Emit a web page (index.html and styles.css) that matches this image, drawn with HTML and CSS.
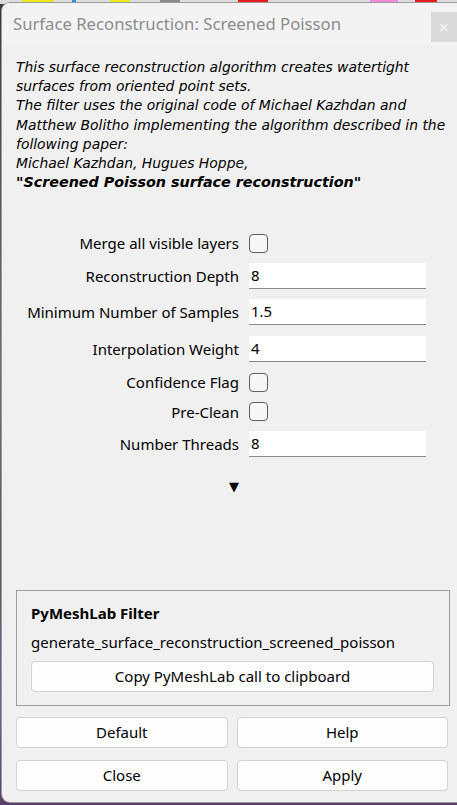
FILE: index.html
```html
<!DOCTYPE html>
<html>
<head>
<meta charset="utf-8">
<link rel="stylesheet" href="styles.css">
</head>
<body>
<div class="desk-strip">
  <span class="blob yellow b1"></span>
  <span class="blob yellow b2"></span>
  <span class="blob blue b3"></span>
  <span class="blob yellow b4"></span>
  <span class="blob gray b5"></span>
  <span class="blob red b6"></span>
  <span class="blob pink b7"></span>
  <span class="blob red b8"></span>
</div>
<div class="window">
  <div class="titlebar">
    <span class="title">Surface Reconstruction: Screened Poisson</span>
    <span class="close">×</span>
  </div>
  <div class="content">
    <div class="desc">
      <div>This surface reconstruction algorithm creates watertight</div>
      <div>surfaces from oriented point sets.</div>
      <div>The filter uses the original code of Michael Kazhdan and</div>
      <div>Matthew Bolitho implementing the algorithm described in the</div>
      <div>following paper:</div>
      <div>Michael Kazhdan, Hugues Hoppe,</div>
      <div class="bold">"Screened Poisson surface reconstruction"</div>
    </div>
    <div class="form">
      <div class="row chk"><span class="label">Merge all visible layers</span><span class="checkbox"></span></div>
      <div class="row inp"><span class="label">Reconstruction Depth</span><span class="input">8</span></div>
      <div class="row inp"><span class="label">Minimum Number of Samples</span><span class="input">1.5</span></div>
      <div class="row inp"><span class="label">Interpolation Weight</span><span class="input">4</span></div>
      <div class="row chk"><span class="label">Confidence Flag</span><span class="checkbox"></span></div>
      <div class="row chk"><span class="label">Pre-Clean</span><span class="checkbox"></span></div>
      <div class="row inp"><span class="label">Number Threads</span><span class="input">8</span></div>
      <div class="row more"><span class="label arrow">▼</span></div>
    </div>
    <div class="group">
      <div class="group-title">PyMeshLab Filter</div>
      <div class="group-text">generate_surface_reconstruction_screened_poisson</div>
      <div class="btn wide">Copy PyMeshLab call to clipboard</div>
    </div>
    <div class="buttons">
      <div class="btn">Default</div>
      <div class="btn">Help</div>
      <div class="btn">Close</div>
      <div class="btn">Apply</div>
    </div>
  </div>
</div>
</body>
</html>
```
FILE: styles.css
```css
html, body {
  margin: 0;
  padding: 0;
}
body {
  width: 457px;
  height: 805px;
  overflow: hidden;
  background: linear-gradient(180deg, #3a3a3a 0%, #6f6f6f 45%, #5a5a5a 70%, #6a62a8 88%, #5b3d6a 100%);
  position: relative;
  font-family: "Noto Sans", "Open Sans", sans-serif;
}
.desk-strip {
  position: absolute;
  left: 0;
  top: 0;
  width: 457px;
  height: 4px;
  background: #dcdcdc;
}
.blob {
  position: absolute;
  top: -3px;
  height: 7px;
  border-radius: 3px;
}
.yellow { background: #f1ea1a; }
.blue { background: #2a8fe0; }
.gray { background: #8a8a8a; }
.red { background: #e81a1a; }
.pink { background: #f08ad8; }
.b1 { left: 22px; width: 32px; }
.b2 { left: 110px; width: 20px; }
.b3 { left: 72px; width: 4px; }
.b4 { left: 112px; width: 18px; }
.b5 { left: 160px; width: 20px; }
.b6 { left: 238px; width: 30px; }
.b7 { left: 370px; width: 28px; }
.b8 { left: 415px; width: 22px; }
.window {
  position: absolute;
  left: 2px;
  top: 3px;
  width: 470px;
  height: 799px;
  background: #f0f0f0;
  border-radius: 8px 0 0 8px;
  box-shadow: 0 0 0 1px #9a9a9a;
  overflow: hidden;
}
.titlebar {
  height: 42px;
  background: #f3f3f3;
  display: flex;
  align-items: center;
  position: relative;
}
.title {
  padding-left: 11px;
  font-size: 16.7px;
  color: #8c8c8c;
  margin-top: -2px;
}
.close {
  position: absolute;
  left: 429px;
  top: 9px;
  width: 26px;
  height: 30px;
  background: #dadada;
  color: #f4f4f4;
  font-size: 18px;
  line-height: 30px;
  text-align: center;
}
.content {
  width: 455px;
  padding-top: 13px;
}
.desc {
  padding-left: 14px;
  font-family: "DejaVu Sans", Verdana, sans-serif;
  font-style: italic;
  font-size: 13.9px;
  line-height: 19.2px;
  color: #000;
  white-space: nowrap;
}
.desc .bold {
  font-weight: bold;
  font-size: 14.3px;
}
.form {
  margin-top: 41px;
  display: flex;
  flex-direction: column;
  gap: 10.5px;
}
.row {
  display: grid;
  grid-template-columns: 237px 177px;
  column-gap: 10px;
  align-items: center;
}
.label {
  text-align: right;
  font-size: 15px;
  color: #000;
  white-space: nowrap;
}
.chk { height: 19px; }
.inp { height: 26px; }
.checkbox {
  width: 17px;
  height: 17px;
  border: 1px solid #5f5f5f;
  border-radius: 4px;
  background: #f6f6f6;
}
.input {
  height: 26px;
  box-sizing: border-box;
  background: #fff;
  border-bottom: 1px solid #8a8a8a;
  font-size: 15px;
  line-height: 25px;
  padding-left: 2px;
}
.more {
  height: 14px;
  margin-top: 12px;
}
.arrow {
  font-family: "DejaVu Sans", sans-serif;
  font-size: 13px;
  line-height: 14px;
}
.group {
  margin: 96px 0 0 14px;
  width: 434px;
  height: 116px;
  border: 1px solid #9e9e9e;
  box-sizing: border-box;
  padding: 11px 14px 0 14px;
}
.group-title {
  font-weight: bold;
  font-size: 15px;
  line-height: 22px;
}
.group-text {
  font-size: 15px;
  line-height: 22px;
  margin-top: 7px;
}
.btn {
  background: #fdfdfd;
  border: 1px solid #d3d3d3;
  border-radius: 4px;
  height: 31px;
  box-sizing: border-box;
  display: flex;
  align-items: center;
  justify-content: center;
  font-size: 15px;
  color: #000;
}
.btn.wide {
  margin-top: 8px;
  width: 403px;
}
.buttons {
  margin: 11px 0 0 14px;
  width: 432px;
  display: grid;
  grid-template-columns: 1fr 1fr;
  column-gap: 9px;
  row-gap: 12px;
}
```
